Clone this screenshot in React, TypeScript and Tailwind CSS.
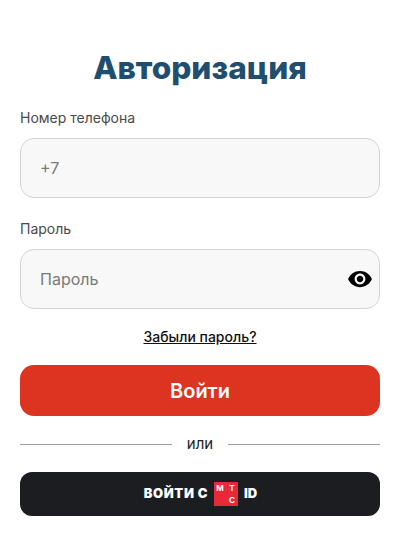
import { useState } from "react"

function EyeIcon() {
	return (
		<svg width="26" height="26" viewBox="0 0 24 24" className="text-black">
			<path
				fill="currentColor"
				d="M12 4.5C7 4.5 2.73 7.61 1 12c1.73 4.39 6 7.5 11 7.5s9.27-3.11 11-7.5c-1.73-4.39-6-7.5-11-7.5zM12 17c-2.76 0-5-2.24-5-5s2.24-5 5-5 5 2.24 5 5-2.24 5-5 5zm0-8c-1.66 0-3 1.34-3 3s1.34 3 3 3 3-1.34 3-3-1.34-3-3-3z"
			/>
		</svg>
	)
}

function Field({ label, placeholder, children }: { label: string; placeholder: string; children?: React.ReactNode }) {
	return (
		<div className="flex flex-col">
			<label className="text-[14px] leading-[20px] text-[#4a4a4a]">{label}</label>
			<div className="mt-[10px] flex h-[60px] items-center justify-between rounded-[14px] border border-[#d4d4d4] bg-[#f8f8f8] pr-[6px] pl-[19px]">
				<span className="text-[16px] text-[#7a7a7a]">{placeholder}</span>
				{children}
			</div>
		</div>
	)
}

export default function App() {
	const [, setShown] = useState(false)

	return (
		<div className="flex min-h-[557px] flex-col bg-white pr-[28px] pl-[20px] font-[family-name:Inter,sans-serif]">
			<h1 className="mt-[46px] text-center text-[31.6px] leading-[44px] font-extrabold text-[#1f4e6f]">Авторизация</h1>

			<div className="mt-[18px]">
				<Field label="Номер телефона" placeholder="+7" />
			</div>
			<div className="mt-[21px]">
				<Field label="Пароль" placeholder="Пароль">
					<button onClick={() => setShown((v) => !v)}>
						<EyeIcon />
					</button>
				</Field>
			</div>

			<a className="mt-[18px] self-center text-[14px] leading-[20px] font-medium text-[#111] underline">Забыли пароль?</a>

			<button className="mt-[18px] h-[51px] rounded-[14px] bg-[#dc3420] text-[20px] font-semibold text-white">Войти</button>

			<div className="mt-[18px] flex h-[20px] items-center gap-[15px]">
				<div className="h-px flex-1 bg-[#a0a0a0]" />
				<span className="text-[15px] leading-[20px] text-[#222]">или</span>
				<div className="h-px flex-1 bg-[#a0a0a0]" />
			</div>

			<button className="mt-[18px] flex h-[44px] items-center justify-center gap-[6px] rounded-[12px] bg-[#1c1d21] pl-[1px] text-[13px] font-black text-white">
				<span className="tracking-[0.6px]">ВОЙТИ С</span>
				<span className="grid h-[24px] w-[24px] grid-cols-2 grid-rows-2 bg-[#e9283a] text-center text-[8px] leading-[12px] font-bold">
					<span>М</span>
					<span>Т</span>
					<span />
					<span>С</span>
				</span>
				<span>ID</span>
			</button>
		</div>
	)
}
